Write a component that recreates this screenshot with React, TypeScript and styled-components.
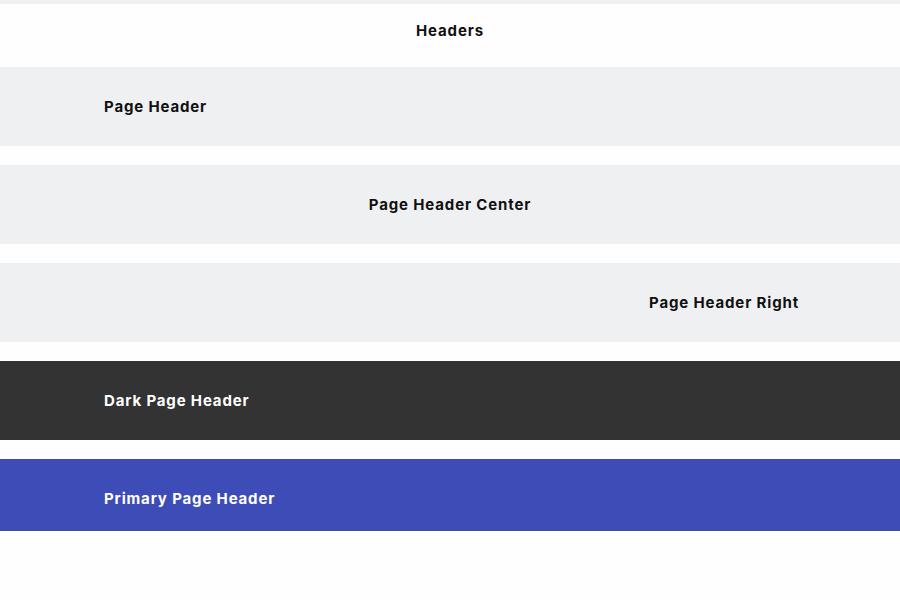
import React from "react";
import styled, { createGlobalStyle } from "styled-components";

const Global = createGlobalStyle`
  html, body { margin: 0; padding: 0; background: #fefefe; }
  body { font-family: Inter, "Noto Sans", sans-serif; }
`;

const Page = styled.div`
  border-top: 4px solid #eff0f2;
  display: flex;
  flex-direction: column;
  gap: 19px;
`;

const Title = styled.h1`
  margin: 0;
  height: 44px;
  box-sizing: border-box;
  padding-top: 8px;
  display: flex;
  align-items: center;
  justify-content: center;
  font-size: 15px;
  font-weight: 700;
  letter-spacing: 0.85px;
  color: #111;
`;

type Variant = "light" | "dark" | "primary";
type Align = "left" | "center" | "right";

const bg: Record<Variant, string> = {
  light: "#eff0f2",
  dark: "#333333",
  primary: "#3e4cb8",
};

const Band = styled.header<{ $variant: Variant; $align: Align; $height: number; $shift?: number }>`
  height: ${(p) => p.$height}px;
  box-sizing: border-box;
  padding: ${(p) => p.$shift ?? 0}px ${(p) => (p.$align === "center" ? 0 : 101)}px 0
    ${(p) => (p.$align === "center" ? 0 : 104)}px;
  display: flex;
  align-items: center;
  justify-content: ${(p) =>
    p.$align === "left" ? "flex-start" : p.$align === "center" ? "center" : "flex-end"};
  background: ${(p) => bg[p.$variant]};
  color: ${(p) => (p.$variant === "light" ? "#111" : "#fff")};
`;

const BandText = styled.h2`
  margin: 0;
  font-size: 15px;
  font-weight: 700;
  letter-spacing: 0.85px;
`;

export default function App() {
  return (
    <>
      <Global />
      <Page>
        <Title>Headers</Title>
        <Band $variant="light" $align="left" $height={79}>
          <BandText>Page Header</BandText>
        </Band>
        <Band $variant="light" $align="center" $height={79}>
          <BandText>Page Header Center</BandText>
        </Band>
        <Band $variant="light" $align="right" $height={79}>
          <BandText>Page Header Right</BandText>
        </Band>
        <Band $variant="dark" $align="left" $height={79}>
          <BandText>Dark Page Header</BandText>
        </Band>
        <Band $variant="primary" $align="left" $height={72} $shift={6}>
          <BandText>Primary Page Header</BandText>
        </Band>
      </Page>
    </>
  );
}
